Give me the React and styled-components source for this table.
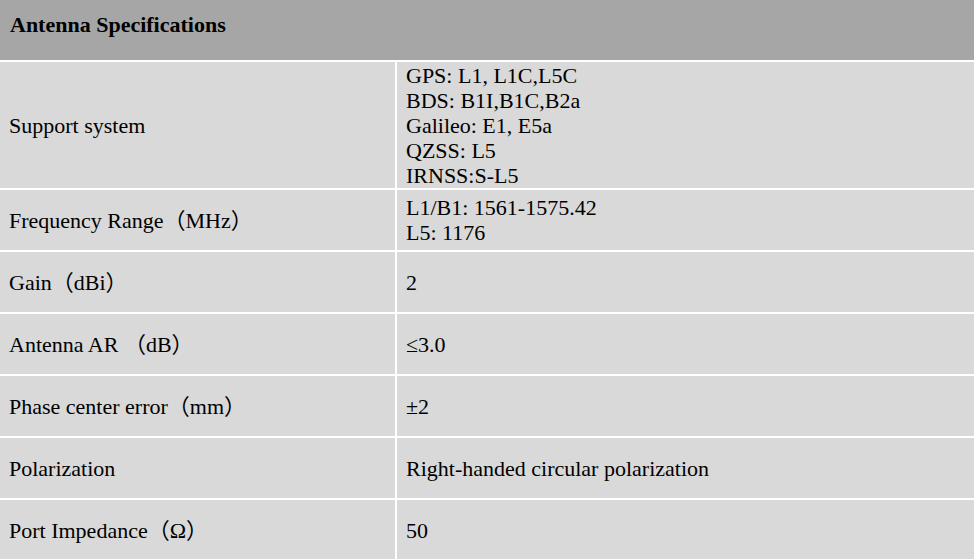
import React from "react";
import styled, { createGlobalStyle } from "styled-components";

const Global = createGlobalStyle`
  html, body { margin: 0; padding: 0; background: #ffffff; }
  body { font-family: "Liberation Serif", "Noto Sans CJK SC", serif; color: #000; }
`;

const Table = styled.div`
  width: 974px;
  display: grid;
  grid-template-columns: 395px 1fr;
  column-gap: 2px;
  row-gap: 2px;
  background: #ffffff;
`;

const Header = styled.div`
  grid-column: 1 / -1;
  height: 60px;
  box-sizing: border-box;
  background: #a6a6a6;
  padding: 12px 0 0 10px;
  font-size: 22px;
  font-weight: bold;
  line-height: 25px;
`;

const Cell = styled.div`
  background: #d9d9d9;
  min-height: ${(p) => (p.$tall ? "126px" : "60px")};
  box-sizing: border-box;
  display: flex;
  flex-direction: column;
  justify-content: center;
  padding: 0 9px;
  font-size: 22px;
  line-height: 25px;
`;

const Line = styled.div`
  white-space: nowrap;
`;

const rows = [
  { label: "Support system", value: ["GPS: L1, L1C,L5C", "BDS: B1I,B1C,B2a", "Galileo: E1, E5a", "QZSS: L5", "IRNSS:S-L5"], tall: true },
  { label: "Frequency Range（MHz）", value: ["L1/B1: 1561-1575.42", "L5: 1176"] },
  { label: "Gain（dBi）", value: ["2"] },
  { label: "Antenna AR （dB）", value: ["≤3.0"] },
  { label: "Phase center error（mm）", value: ["±2"] },
  { label: "Polarization", value: ["Right-handed circular polarization"] },
  { label: "Port Impedance（Ω）", value: ["50"] },
];

export default function App() {
  return (
    <>
      <Global />
      <Table>
        <Header>Antenna Specifications</Header>
        {rows.map((r) => (
          <React.Fragment key={r.label}>
            <Cell $tall={r.tall}>
              <Line>{r.label}</Line>
            </Cell>
            <Cell $tall={r.tall}>
              {r.value.map((v) => (
                <Line key={v}>{v}</Line>
              ))}
            </Cell>
          </React.Fragment>
        ))}
      </Table>
    </>
  );
}
